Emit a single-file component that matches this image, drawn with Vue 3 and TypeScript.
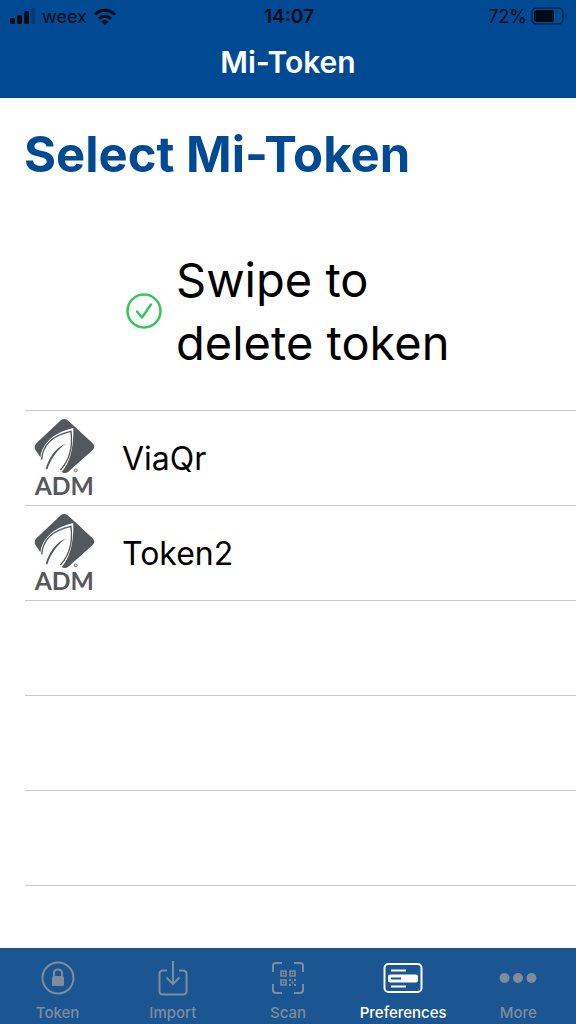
<script setup lang="ts">
import { ref } from 'vue'

interface Token {
  id: number
  name: string
}

interface Tab {
  id: string
  label: string
}

const tokens: Token[] = [
  { id: 1, name: 'ViaQr' },
  { id: 2, name: 'Token2' },
]

const tabs: Tab[] = [
  { id: 'token', label: 'Token' },
  { id: 'import', label: 'Import' },
  { id: 'scan', label: 'Scan' },
  { id: 'preferences', label: 'Preferences' },
  { id: 'more', label: 'More' },
]

const active = ref('preferences')
const emptyRows = 3
</script>

<template>
  <div class="screen">
    <header class="top">
      <div class="status">
        <div class="status-left">
          <svg class="signal" viewBox="0 0 26 16" aria-hidden="true">
            <rect x="0" y="10" width="5" height="6" rx="1.5" />
            <rect x="7" y="7" width="5" height="9" rx="1.5" />
            <rect x="14" y="3" width="5" height="13" rx="1.5" />
            <rect x="21" y="0" width="4" height="16" rx="1.5" opacity="0.25" />
          </svg>
          <span>weex</span>
          <svg class="wifi" viewBox="0 0 24 17" aria-hidden="true">
            <path d="M2 6.5C7.500 .8 16.500 .8 22 6.500" fill="none" stroke="currentColor" stroke-width="3.200" />
            <path d="M6 10.700C9.400 7.300 14.600 7.300 18 10.700" fill="none" stroke="currentColor" stroke-width="3" />
            <path d="M12 17L8.600 13.600Q12 10.600 15.400 13.600Z" />
          </svg>
        </div>
        <time class="clock">14:07</time>
        <div class="status-right">
          <span>72%</span>
          <svg class="battery" viewBox="0 0 37 18" aria-hidden="true">
            <rect x="1" y="1" width="31" height="16" rx="4.500" fill="none" stroke="currentColor" stroke-width="1.500" opacity="0.55" />
            <rect x="3" y="3" width="20" height="12" rx="2.500" />
            <path d="M34.500 6Q37 9 34.500 12Z" opacity="0.55" />
          </svg>
        </div>
      </div>
      <div class="nav-title">Mi-Token</div>
    </header>

    <main class="content">
      <h1>Select Mi-Token</h1>

      <div class="hint">
        <svg class="check" viewBox="0 0 36 36" fill="none" stroke="currentColor" aria-hidden="true">
          <circle cx="18" cy="18" r="16.500" stroke-width="2.500" />
          <path d="M11 18.500L16 24.500L25 11.500" stroke-width="2.400" stroke-linecap="round" stroke-linejoin="round" />
        </svg>
        <p>Swipe to delete token</p>
      </div>

      <ul class="list">
        <li v-for="token in tokens" :key="token.id" class="row">
          <svg class="logo" viewBox="40 30 186 258" role="img" aria-label="ADM">
            <path
              d="M121 45Q132 38 143 47L215 114Q226 124 216 135L143 200Q133 208 123 201Q160 160 158 69Q88 85 66 132Q60 145 59 157L46 137Q37 125 48 114Z"
              fill="#54585a"
            />
            <path
              d="M63 163C66 122 95 91 151 79C157 128 148 164 119 195"
              fill="none"
              stroke="#54585a"
              stroke-width="4"
            />
            <path d="M75 193C83 162 103 128 137 115C112 132 91 160 80 193Z" fill="#54585a" />
            <circle cx="165" cy="196" r="4.500" fill="none" stroke="#777b7d" stroke-width="3" />
            <text x="131" y="271" text-anchor="middle" class="logo-text">ADM</text>
          </svg>
          <span>{{ token.name }}</span>
        </li>
        <li v-for="n in emptyRows" :key="'empty' + n" class="row" aria-hidden="true"></li>
      </ul>
    </main>

    <nav class="tabs">
      <button
        v-for="tab in tabs"
        :key="tab.id"
        type="button"
        class="tab"
        :class="{ active: active === tab.id }"
        @click="active = tab.id"
      >
        <svg class="tab-icon" viewBox="0 0 42 36" fill="none" stroke="currentColor" stroke-width="2" aria-hidden="true">
          <template v-if="tab.id === 'token'">
            <circle cx="21" cy="18" r="15.500" />
            <rect x="15" y="16" width="12" height="10" rx="1.500" fill="currentColor" stroke="none" />
            <path d="M17 17V13Q17 9.500 21 9.500T25 13V17" />
          </template>
          <template v-else-if="tab.id === 'import'">
            <path d="M15 10.500H11Q7.500 10.500 7.500 14V31Q7.500 34.500 11 34.500H31Q34.500 34.500 34.500 31V14Q34.500 10.500 31 10.500H27" />
            <path d="M21 1V24M14.500 17.500L21 24L27.500 17.500" />
          </template>
          <template v-else-if="tab.id === 'scan'">
            <path d="M6 12V6Q6 3 9 3H15M27 3H33Q36 3 36 6V12M36 24V30Q36 33 33 33H27M15 33H9Q6 33 6 30V24" />
            <path d="M14 11H19V16H14ZM23 11H28V16H23ZM14 20H19V25H14Z" stroke-width="1.600" />
            <path d="M16 13H17V14H16ZM25 13H26V14H25ZM16 22H17V23H16Z" stroke-width="1" />
            <path d="M22 19H24V21H22ZM27 19H29V21H27ZM24.500 21.500H26.500V23.500H24.500ZM22 24H24V26H22ZM27 24H29V26H27Z" fill="currentColor" stroke="none" />
          </template>
          <template v-else-if="tab.id === 'preferences'">
            <rect x="2.500" y="4" width="37" height="28" rx="4" />
            <path d="M9 10.500H24M9 26.500H24" />
            <rect x="6" y="14.500" width="30" height="8" rx="2" fill="currentColor" stroke="none" />
            <path d="M9 18.500H19" stroke="#1b5592" stroke-width="2" />
          </template>
          <g v-else fill="currentColor" stroke="none">
            <circle cx="7.500" cy="18" r="5" />
            <circle cx="21" cy="18" r="5" />
            <circle cx="34.500" cy="18" r="5" />
          </g>
        </svg>
        <span>{{ tab.label }}</span>
      </button>
    </nav>
  </div>
</template>

<style>
body {
  margin: 0;
  background: #fff;
}
</style>

<style scoped>
.screen {
  display: flex;
  flex-direction: column;
  min-height: 100vh;
  font-family: Inter, "Liberation Sans", sans-serif;
  color: #000;
  background: #fff;
}

.top {
  color: #020a16;
  background: #004a94;
}

.status {
  display: grid;
  grid-template-columns: 1fr auto 1fr;
  align-items: center;
  height: 32px;
  padding: 0 8px 0 10px;
  font-size: 18px;
}

.status-left,
.status-right {
  display: flex;
  align-items: center;
}

.status-left {
  gap: 6px;
}

.status-right {
  justify-content: flex-end;
  gap: 4px;
}

.status svg {
  fill: currentColor;
}

.signal {
  width: 26px;
  height: 16px;
}

.wifi {
  width: 24px;
  height: 17px;
}

.battery {
  width: 37px;
  height: 18px;
}

.clock {
  font-size: 19px;
  font-weight: 600;
}

.nav-title {
  padding: 10px 0 16px;
  font-size: 30px;
  font-weight: 600;
  line-height: 40px;
  text-align: center;
  color: #fff;
}

.content {
  flex: 1;
}

h1 {
  margin: 0;
  padding: 26px 24px 0;
  font-size: 49px;
  font-weight: 700;
  line-height: 62px;
  color: #004a94;
}

.hint {
  display: flex;
  align-items: center;
  justify-content: center;
  gap: 14px;
  padding: 62px 0 36px;
}

.hint p {
  width: 274px;
  margin: 0;
  font-size: 47px;
  line-height: 63px;
}

.check {
  flex: none;
  width: 36px;
  height: 36px;
  color: #34c759;
}

.list {
  margin: 0 0 0 25px;
  padding: 0;
  list-style: none;
  border-top: 1px solid #c8c8ca;
}

.row {
  display: flex;
  align-items: center;
  gap: 26px;
  box-sizing: border-box;
  height: 95px;
  padding-left: 9px;
  font-size: 32px;
  border-bottom: 1px solid #c8c8ca;
}

.logo {
  width: 62px;
  height: 86px;
}

.logo-text {
  font-family: Lato, sans-serif;
  font-size: 74px;
  font-weight: 700;
  fill: #54585a;
}

.tabs {
  display: grid;
  grid-template-columns: repeat(5, 1fr);
  height: 76px;
  background: #1b5592;
}

.tab {
  display: flex;
  flex-direction: column;
  align-items: center;
  gap: 8px;
  padding: 12px 0 0;
  border: 0;
  font: 500 15px/18px Inter, "Liberation Sans", sans-serif;
  color: #7e8c9c;
  background: none;
}

.tab.active {
  color: #fff;
}

.tab-icon {
  width: 42px;
  height: 36px;
}
</style>
